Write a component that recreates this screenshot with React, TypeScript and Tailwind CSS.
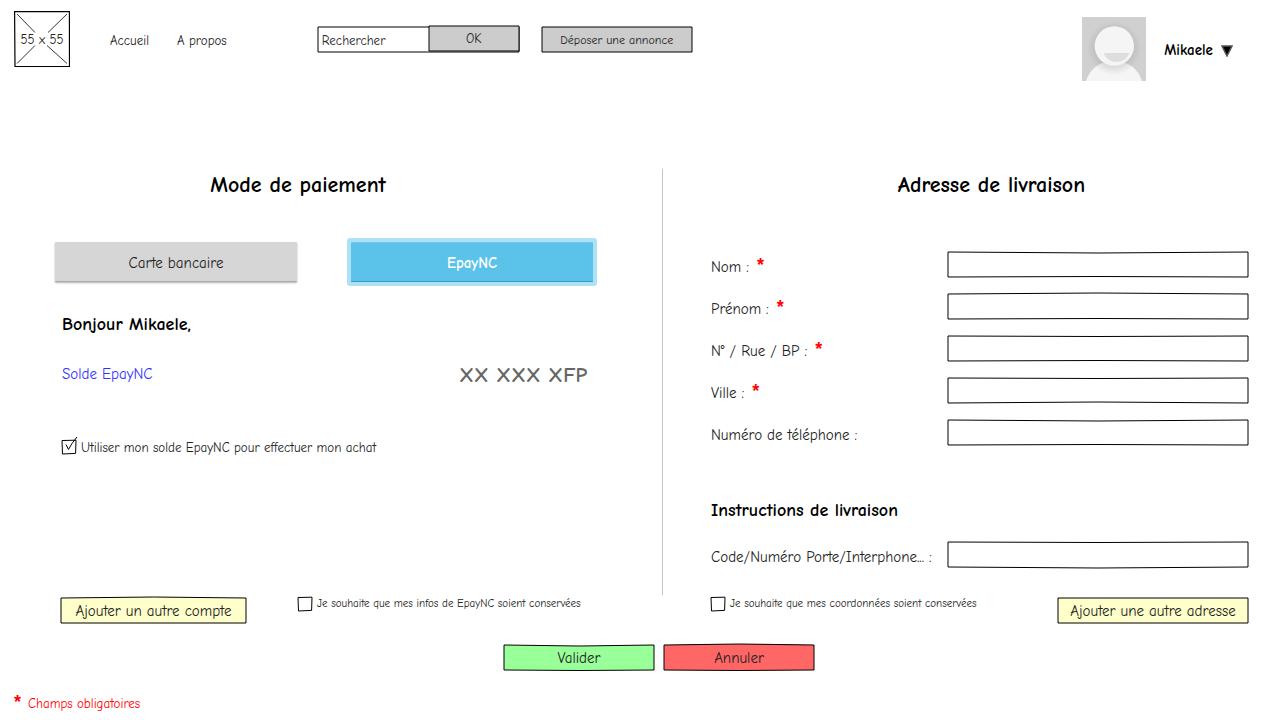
import type { ButtonHTMLAttributes, ReactNode } from "react";

type Bow = { top?: number; bottom?: number };

/** Hand-drawn rectangle behind a control; `top` and `bottom` bend the long edges. */
function Outline({ top = 0, bottom = 0, fill = "fill-white" }: Bow & { fill?: string }) {
  return (
    <svg
      className={`pointer-events-none absolute inset-0 -z-10 size-full overflow-visible ${fill}`}
      viewBox="0 0 100 25"
      preserveAspectRatio="none"
      aria-hidden="true"
    >
      <path
        d={`M0 0Q50 ${top} 100 0V25Q50 ${25 + bottom} 0 25Z`}
        stroke="black"
        strokeWidth="1"
        vectorEffect="non-scaling-stroke"
      />
    </svg>
  );
}

function SketchButton({
  children,
  className,
  fill,
  top,
  bottom,
  ...rest
}: Bow & ButtonHTMLAttributes<HTMLButtonElement> & { fill: string; children: ReactNode }) {
  return (
    <button
      {...rest}
      className={`relative isolate h-[25px] shrink-0 cursor-pointer pt-0.5 whitespace-nowrap text-center ${className}`}
    >
      <Outline top={top} bottom={bottom} fill={fill} />
      {children}
    </button>
  );
}

function Star() {
  return (
    <span className="relative -top-0.5 font-['Liberation_Sans',sans-serif] text-lg leading-none font-bold text-[#f00]">
      *
    </span>
  );
}

function Field({ id, label, required, top, bottom }: Bow & { id: string; label: string; required?: boolean }) {
  return (
    <div className="flex h-[25px] items-center justify-between">
      <label htmlFor={id} className="flex items-center gap-2 pt-[5px] text-[15px] whitespace-nowrap">
        {label}
        {required && <Star />}
      </label>
      <div className="relative isolate h-[25px] w-[300px]">
        <Outline top={top} bottom={bottom} />
        <input id={id} required={required} className="block size-full bg-transparent px-1 text-[15px] outline-none" />
      </div>
    </div>
  );
}

function Check({ id, label, checked, size }: { id: string; label: string; checked?: boolean; size: string }) {
  return (
    <div className="flex items-center gap-[5px]">
      <span className="relative isolate size-[14px]">
        <input
          id={id}
          type="checkbox"
          defaultChecked={checked}
          className="peer block size-full cursor-pointer appearance-none"
        />
        <svg
          className="pointer-events-none absolute inset-0 -z-10 size-full overflow-visible"
          viewBox="0 0 14 14"
          fill="none"
          stroke="black"
          aria-hidden="true"
        >
          <path d="M0 .5 14 .2 13.6 13.4.5 14Z" />
        </svg>
        <svg
          className="pointer-events-none absolute inset-0 hidden size-full overflow-visible peer-checked:block"
          viewBox="0 0 14 14"
          fill="none"
          stroke="black"
          aria-hidden="true"
        >
          <path d="M4 4.5 6.5 9.5Q9 4 15-3" />
        </svg>
      </span>
      <label htmlFor={id} className={`cursor-pointer pt-px whitespace-nowrap ${size}`}>
        {label}
      </label>
    </div>
  );
}

function Logo() {
  return (
    <svg className="size-14 shrink-0" viewBox="0 0 56 56" fill="none" stroke="black" role="img" aria-label="55 x 55">
      <path d="M.6.6 55.4.6 55.5 55.4 1 55.5Z" strokeWidth="1.2" />
      <path d="M3 3 21 21.500M53 3 34 21.500M3 52.500 21 34.500M53 52.500 33 34.500" strokeWidth=".8" />
      <text x="28" y="33" textAnchor="middle" stroke="none" fill="#222" className="text-[13px]">
        55 x 55
      </text>
    </svg>
  );
}

function Avatar() {
  return (
    <svg className="size-16 shrink-0" viewBox="0 0 64 64" role="img" aria-label="Mikaele">
      <defs>
        <radialGradient id="shade">
          <stop offset=".7" stopColor="#c0c0c0" />
          <stop offset="1" stopColor="#d0d0d0" />
        </radialGradient>
        <radialGradient id="neck" gradientUnits="userSpaceOnUse" cx="32" cy="31" r="27">
          <stop offset=".7" stopColor="#dcdcdc" />
          <stop offset="1" stopColor="#f5f5f5" />
        </radialGradient>
      </defs>
      <rect width="64" height="64" fill="#d0d0d0" />
      <circle cx="32" cy="31" r="27" fill="url(#shade)" />
      <path d="M4 64C8 52 17 44 32 44S56 52 60 64Z" fill="url(#neck)" />
      <circle cx="32.300" cy="29" r="19.700" fill="#f5f5f5" />
      <path d="M21.500 36H47.500C45 42 40 45 34.500 45S24 42 21.500 36Z" fill="#dedede" />
    </svg>
  );
}

export default function App() {
  return (
    <div className="min-h-screen bg-white font-['Comic_Sans_MS','Comic_Neue',Lato,sans-serif] text-[#222]">
      <header className="flex items-start pt-[11px] pr-[47px] pl-[14px]">
        <div className="flex h-14 items-center">
          <Logo />
          <nav className="ml-10 flex gap-7 pt-[3px] text-[13px]">
            <a href="#accueil">Accueil</a>
            <a href="#apropos">A propos</a>
          </nav>
          <form className="relative isolate ml-[91px] flex h-[25px] w-[201px]" onSubmit={(e) => e.preventDefault()}>
            <Outline />
            <input
              aria-label="Rechercher"
              placeholder="Rechercher"
              className="w-[111px] bg-transparent px-1 pt-1 text-[13px] outline-none placeholder:text-[#222]"
            />
            <SketchButton type="submit" fill="fill-[#ccc]" className="bottom-px w-[90px] text-[13px]">
              OK
            </SketchButton>
          </form>
          <SketchButton type="button" fill="fill-[#ccc]" className="ml-[23px] w-[150px] text-xs">
            Déposer une annonce
          </SketchButton>
        </div>
        <div className="mt-1.5 ml-auto flex items-center">
          <Avatar />
          <button
            type="button"
            className="ml-[18px] flex cursor-pointer items-center gap-2 pt-[3px] text-[15px] font-bold text-black"
          >
            Mikaele
            <svg className="size-3" viewBox="0 0 12 12" aria-hidden="true">
              <path d="M1 1H11L6 11Z" fill="black" stroke="#555" strokeWidth="1.5" />
            </svg>
          </button>
        </div>
      </header>

      <main className="pt-[88px]">
        <div className="grid grid-cols-[662fr_618fr]">
          <section className="flex h-[426px] flex-col pr-[69px] pl-[55px]">
            <h2 className="pr-[52px] text-center text-[22px] leading-8 font-bold text-black">Mode de paiement</h2>
            <div className="mt-[41px] grid grid-cols-2 gap-[54px] text-[15px]">
              <button
                type="button"
                className="h-10 cursor-pointer rounded-[1px] border-b border-[#aaa] bg-[#d6d6d6] pt-[3px] shadow-[0_1px_2px_rgba(0,0,0,0.3)]"
              >
                Carte bancaire
              </button>
              <button
                type="button"
                className="h-10 cursor-pointer rounded-[1px] border-t border-b border-t-[#75c7e8] border-b-[#3e96bd] bg-[#5bc2ea] pt-0.5 font-bold text-white ring-4 ring-[#ade1f5]"
              >
                EpayNC
              </button>
            </div>
            <div className="mt-[31px] pr-1.5 pl-[7px]">
              <h3 className="text-lg leading-6 font-bold text-black">Bonjour Mikaele,</h3>
              <div className="mt-[21px] flex items-center justify-between">
                <span className="text-[15px] text-[#33f]">Solde EpayNC</span>
                <span className="pt-px text-[21px] leading-8 font-bold text-[#666]">XX XXX XFP</span>
              </div>
              <div className="mt-[46px]">
                <Check id="use-balance" label="Utiliser mon solde EpayNC pour effectuer mon achat" checked size="text-[13px]" />
              </div>
            </div>
          </section>

          <section className="flex h-[426px] flex-col border-l border-[#c4c4c4] pr-8 pl-12">
            <h2 className="pl-6 text-center text-[22px] leading-8 font-bold text-black">Adresse de livraison</h2>
            <div className="mt-[51px] flex flex-col gap-[17px]">
              <Field id="nom" label="Nom :" required top={2} bottom={-1} />
              <Field id="prenom" label="Prénom :" required top={-2} bottom={-1} />
              <Field id="rue" label="N° / Rue / BP :" required top={1} bottom={-1} />
              <Field id="ville" label="Ville :" required top={1} bottom={-2} />
              <Field id="tel" label="Numéro de téléphone :" top={2} bottom={-1} />
            </div>
            <h3 className="mt-[54px] text-lg leading-6 font-bold text-black">Instructions de livraison</h3>
            <div className="mt-[19px]">
              <Field id="code" label="Code/Numéro Porte/Interphone... :" top={1} bottom={2} />
            </div>
          </section>
        </div>

        <div className="mt-[3px] grid grid-cols-[662fr_618fr]">
          <div className="flex items-start pl-[61px]">
            <SketchButton type="button" fill="fill-[#ffc]" top={-2} className="w-[185px] text-[15px]">
              Ajouter un autre compte
            </SketchButton>
            <div className="ml-[52px] flex h-3 items-center">
              <Check id="keep-epaync" label="Je souhaite que mes infos de EpayNC soient conservées" size="text-[11px]" />
            </div>
          </div>
          <div className="flex items-start justify-between pr-8 pl-[49px]">
            <div className="flex h-3 items-center">
              <Check id="keep-address" label="Je souhaite que mes coordonnées soient conservées" size="text-[11px]" />
            </div>
            <SketchButton type="button" fill="fill-[#ffc]" className="w-[190px] text-[15px]">
              Ajouter une autre adresse
            </SketchButton>
          </div>
        </div>

        <div className="mt-[22px] flex justify-center gap-2.5 pl-[38px] text-[15px]">
          <SketchButton type="submit" fill="fill-[#9f9]" top={2} bottom={1} className="w-[150px]">
            Valider
          </SketchButton>
          <SketchButton type="button" fill="fill-[#f66]" top={-2} bottom={1} className="w-[150px]">
            Annuler
          </SketchButton>
        </div>
      </main>

      <footer className="mt-[22px] flex h-6 items-center gap-[7px] pl-[14px] text-[13px] text-[#f00]">
        <Star />
        Champs obligatoires
      </footer>
    </div>
  );
}
